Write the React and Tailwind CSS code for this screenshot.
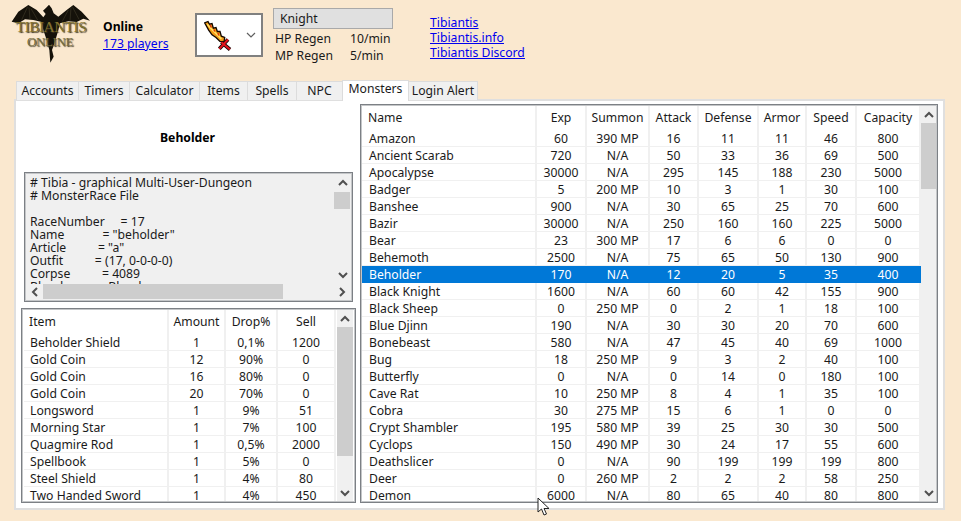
const monsters = [
["Amazon","60","390 MP","16","11","11","46","800"],
["Ancient Scarab","720","N/A","50","33","36","69","500"],
["Apocalypse","30000","N/A","295","145","188","230","5000"],
["Badger","5","200 MP","10","3","1","30","100"],
["Banshee","900","N/A","30","65","25","70","600"],
["Bazir","30000","N/A","250","160","160","225","5000"],
["Bear","23","300 MP","17","6","6","0","0"],
["Behemoth","2500","N/A","75","65","50","130","900"],
["Beholder","170","N/A","12","20","5","35","400"],
["Black Knight","1600","N/A","60","60","42","155","900"],
["Black Sheep","0","250 MP","0","2","1","18","100"],
["Blue Djinn","190","N/A","30","30","20","70","600"],
["Bonebeast","580","N/A","47","45","40","69","1000"],
["Bug","18","250 MP","9","3","2","40","100"],
["Butterfly","0","N/A","0","14","0","180","100"],
["Cave Rat","10","250 MP","8","4","1","35","100"],
["Cobra","30","275 MP","15","6","1","0","0"],
["Crypt Shambler","195","580 MP","39","25","30","30","500"],
["Cyclops","150","490 MP","30","24","17","55","600"],
["Deathslicer","0","N/A","90","199","199","199","800"],
["Deer","0","260 MP","2","2","2","58","250"],
["Demon","6000","N/A","80","65","40","80","800"],
];
const loot = [
["Beholder Shield","1","0,1%","1200"],
["Gold Coin","12","90%","0"],
["Gold Coin","16","80%","0"],
["Gold Coin","20","70%","0"],
["Longsword","1","9%","51"],
["Morning Star","1","7%","100"],
["Quagmire Rod","1","0,5%","2000"],
["Spellbook","1","5%","0"],
["Steel Shield","1","4%","80"],
["Two Handed Sword","1","4%","450"],
];
function Chevron({dir, className=""}) {
  const p = { up:"M1 6 L5 2 L9 6", down:"M1 2 L5 6 L9 2", left:"M6 1 L2 5 L6 9", right:"M3 1 L7 5 L3 9" }[dir];
  const vb = dir==="up"||dir==="down" ? "0 0 10 8" : "0 0 9 10";
  const s = dir==="up"||dir==="down" ? "w-[10px] h-[8px]" : "w-[9px] h-[10px]";
  return <svg viewBox={vb} className={s+" "+className}><path d={p} fill="none" stroke="#505050" strokeWidth="2"/></svg>;
}
function VScroll({thumbH, width}) {
  return (
    <div className="shrink-0 bg-[#f0f0f0] flex flex-col" style={{width}}>
      <div className="h-[17px] shrink-0 flex items-center justify-center"><Chevron dir="up"/></div>
      <div className="flex-1 min-h-0 flex flex-col">
        <div className="bg-[#cdcdcd] shrink-0" style={{height:thumbH}}/>
      </div>
      <div className="h-[17px] shrink-0 flex items-center justify-center"><Chevron dir="down"/></div>
    </div>
  );
}
function Table({cols, headers, rows, selected, firstPad, headerH}) {
  return (
    <div className="shrink-0">
      <div className="flex" style={{height:headerH}}>
        {headers.map((h,i)=>(
          <div key={h} className={"flex items-center pt-[1px] border-r-2 border-[#f0f0f0] "+(i===0?"justify-start":"justify-center")} style={{width:cols[i], paddingLeft:i===0?firstPad:0}}>{h}</div>
        ))}
      </div>
      {rows.map((r,ri)=>(
        <div key={ri} className={"flex h-[17px] "+(ri===selected?"bg-[#0078d7] text-white":"")}>
          {r.map((c,i)=>(
            <div key={i} className={"border-b border-r-2 pt-[2px] flex items-center "+(ri===selected?"border-[#0078d7] ":"border-[#f0f0f0] ")+(i===0?"justify-start":"justify-center")} style={{width:cols[i], paddingLeft:i===0?firstPad+1:0}}>{c}</div>
          ))}
        </div>
      ))}
    </div>
  );
}
function Logo() {
  return (
    <div className="relative w-[90px] h-[68px] ml-[5px] shrink-0">
      <svg viewBox="0 0 270 204" className="absolute inset-0 w-[90px] h-[68px]">
        <path d="M70 15 L95 30 L115 52 L122 42 L114 32 L125 22 L132 14 L140 25 L146 40 L160 50 L185 30 L205 15 L230 35 L255 62 L235 56 L215 66 L190 64 L165 70 L160 90 L150 125 L141 150 L146 170 L136 188 L133 150 L125 120 L115 90 L110 66 L85 60 L60 58 L40 70 L20 65 L40 35 Z" fill="#15120a"/>
        <path d="M68 20 L50 60 M72 22 L75 58 M78 26 L98 60 M202 20 L222 58 M198 22 L195 62 M190 30 L172 64" stroke="#4a4430" strokeWidth="1.5" fill="none"/>
      </svg>
      <div className="absolute left-[10px] top-[18px] w-[72px] text-center text-[15.5px] leading-[17px] text-[#85732e] tracking-[-0.6px] whitespace-nowrap [font-family:'Liberation_Serif',serif] [text-shadow:1px_1px_1px_#3a3320]">TIBIANTIS</div>
      <div className="absolute left-[22px] top-[35px] w-[46px] text-center text-[13px] leading-[13px] text-[#7a7040] tracking-[-0.4px] whitespace-nowrap [font-family:'Liberation_Serif',serif] [text-shadow:1px_1px_1px_#3a3320]">ONLINE</div>
    </div>
  );
}
function Sword() {
  return (
    <svg viewBox="36 26 84 92" className="w-[28px] h-[31px] shrink-0">
      <path d="M38 34 L48 30 L52 38 L60 36 L64 50 L72 48 L76 60 L84 60 L88 74 L98 78 L96 92 L84 90 L72 78 L60 70 L50 56 Z" fill="#f59a14" stroke="#120800" strokeWidth="4" strokeLinejoin="miter"/>
      <path d="M46 38 L56 50 L66 60 L78 72 L88 82" stroke="#ffe060" strokeWidth="5" fill="none"/>
      <path d="M54 40 L58 48 M66 54 L68 60 M78 64 L80 72" stroke="#d8300c" strokeWidth="4" fill="none"/>
      <path d="M82 112 L108 84 M88 92 L114 114" stroke="#160404" strokeWidth="11" fill="none"/>
      <path d="M82 112 L108 84 M88 92 L114 114" stroke="#e4121c" strokeWidth="6" fill="none"/>
    </svg>
  );
}
const tabs = [["Accounts",62],["Timers",51],["Calculator",70],["Items",48],["Spells",49],["NPC",46]];
export default function App() {
  return (
    <div className="relative w-[961px] h-[521px] bg-[#fae8cf] overflow-hidden text-[12.2px] text-[#1a1a1a] [font-family:'Noto_Sans',sans-serif]">
      <div className="flex h-[81px]">
        <Logo/>
        <div className="ml-[8px] mt-[18px] w-[92px] shrink-0">
          <div className="font-bold text-black leading-[17px]">Online</div>
          <a className="text-[#0000ee] underline leading-[17px] block">173 players</a>
        </div>
        <div className="mt-[13px] w-[68px] h-[44px] shrink-0 bg-white border-2 border-[#808080] flex items-center pl-[7px]">
          <Sword/>
          <svg viewBox="0 0 10 6" className="w-[10px] h-[6px] ml-[14px] shrink-0"><path d="M1 1 L5 5 L9 1" fill="none" stroke="#606060" strokeWidth="1.2"/></svg>
        </div>
        <div className="ml-[10px] mt-[8px] w-[120px] shrink-0">
          <div className="h-[21px] bg-[#e0e0e0] border border-[#a9a9a9] pl-[6px] pt-[1px] flex items-center">Knight</div>
          <div className="flex mt-[2px] h-[17px] items-center pl-[2px]"><span className="w-[75px]">HP Regen</span><span>10/min</span></div>
          <div className="flex h-[17px] items-center pl-[2px]"><span className="w-[75px]">MP Regen</span><span>5/min</span></div>
        </div>
        <div className="ml-[37px] mt-[15px] flex flex-col text-[#0000ee] underline leading-[15px]">
          <a>Tibiantis</a><a>Tibiantis.info</a><a>Tibiantis Discord</a>
        </div>
      </div>
      <div className="ml-[16px] flex items-end h-[19px] relative z-10">
        {tabs.map(([t,w])=>(
          <div key={t} className="h-[19px] bg-[#f0f0f0] border border-b-0 border-[#dcdcdc] -mr-px flex items-center justify-center" style={{width:w+1}}>{t}</div>
        ))}
        <div className="relative h-[21px] w-[67px] bg-white border border-b-0 border-[#dcdcdc] flex items-center justify-center mb-[-1px] z-10 pb-[3px]">Monsters</div>
        <div className="h-[19px] w-[70px] -ml-px bg-[#f0f0f0] border border-b-0 border-[#dcdcdc] flex items-center justify-center">Login Alert</div>
      </div>
      <div className="ml-[14px] w-[931px] h-[411px] -mt-px bg-white border-2 border-[#dfdfdf] flex">
        <div className="w-[344px] shrink-0 flex flex-col">
          <div className="h-[71px] pt-[27px] text-center font-bold text-black leading-[20px] shrink-0 w-[343px]">Beholder</div>
          <div className="ml-[8px] w-[329px] h-[130px] border border-[#7c8085] shrink-0">
            <div className="size-full border border-[#c4c6c8] bg-[#f0f0f0] flex flex-col">
              <div className="flex h-[110px]">
                <div className="flex-1 overflow-hidden pl-[4px] leading-[13px] whitespace-pre pt-[2px]">
{`# Tibia - graphical Multi-User-Dungeon
# MonsterRace File

RaceNumber     = 17
Name            = "beholder"
Article          = "a"
Outfit          = (17, 0-0-0-0)
Corpse          = 4089
Blood           = Blood`}
                </div>
                <div className="w-[17px] shrink-0 flex flex-col items-center justify-between py-[5px] relative">
                  <Chevron dir="up"/><Chevron dir="down"/>
                  <div className="absolute left-0 top-[18px] w-[16px] h-[17px] bg-[#cdcdcd]"/>
                </div>
              </div>
              <div className="flex-1 flex items-center justify-between px-[5px] relative">
                <Chevron dir="left"/><Chevron dir="right"/>
                <div className="absolute left-[17px] top-0 w-[240px] h-[15px] bg-[#cdcdcd]"/>
              </div>
            </div>
          </div>
          <div className="ml-[5px] mt-[6px] w-[335px] h-[195px] border border-[#7c8085] shrink-0">
            <div className="size-full border border-[#c4c6c8] flex overflow-hidden">
              <div className="w-[1px] shrink-0"/>
              <Table cols={[145,57,52,58]} headers={["Item","Amount","Drop%","Sell"]} rows={loot} firstPad={5} headerH={24}/>
              <div className="w-[1px] shrink-0"/>
              <VScroll thumbH={129} width={16}/>
            </div>
          </div>
        </div>
        <div className="mt-[3px] w-[578px] h-[399px] border border-[#7c8085] shrink-0">
          <div className="size-full border border-[#c4c6c8] flex overflow-hidden">
            <Table cols={[175,50,63,49,60,48,50,64]} headers={["Name","Exp","Summon","Attack","Defense","Armor","Speed","Capacity"]} rows={monsters} selected={8} firstPad={6} headerH={24}/>
            <VScroll thumbH={66} width={15}/>
          </div>
        </div>
      </div>
      <svg viewBox="0 0 14 20" className="absolute left-[537px] top-[497px] w-[14px] h-[20px]">
        <path d="M1 1 L1 15 L4.5 12 L7 18 L9.5 17 L7 11.5 L12 11.5 Z" fill="#fff" stroke="#222" strokeWidth="1"/>
      </svg>
    </div>
  );
}
